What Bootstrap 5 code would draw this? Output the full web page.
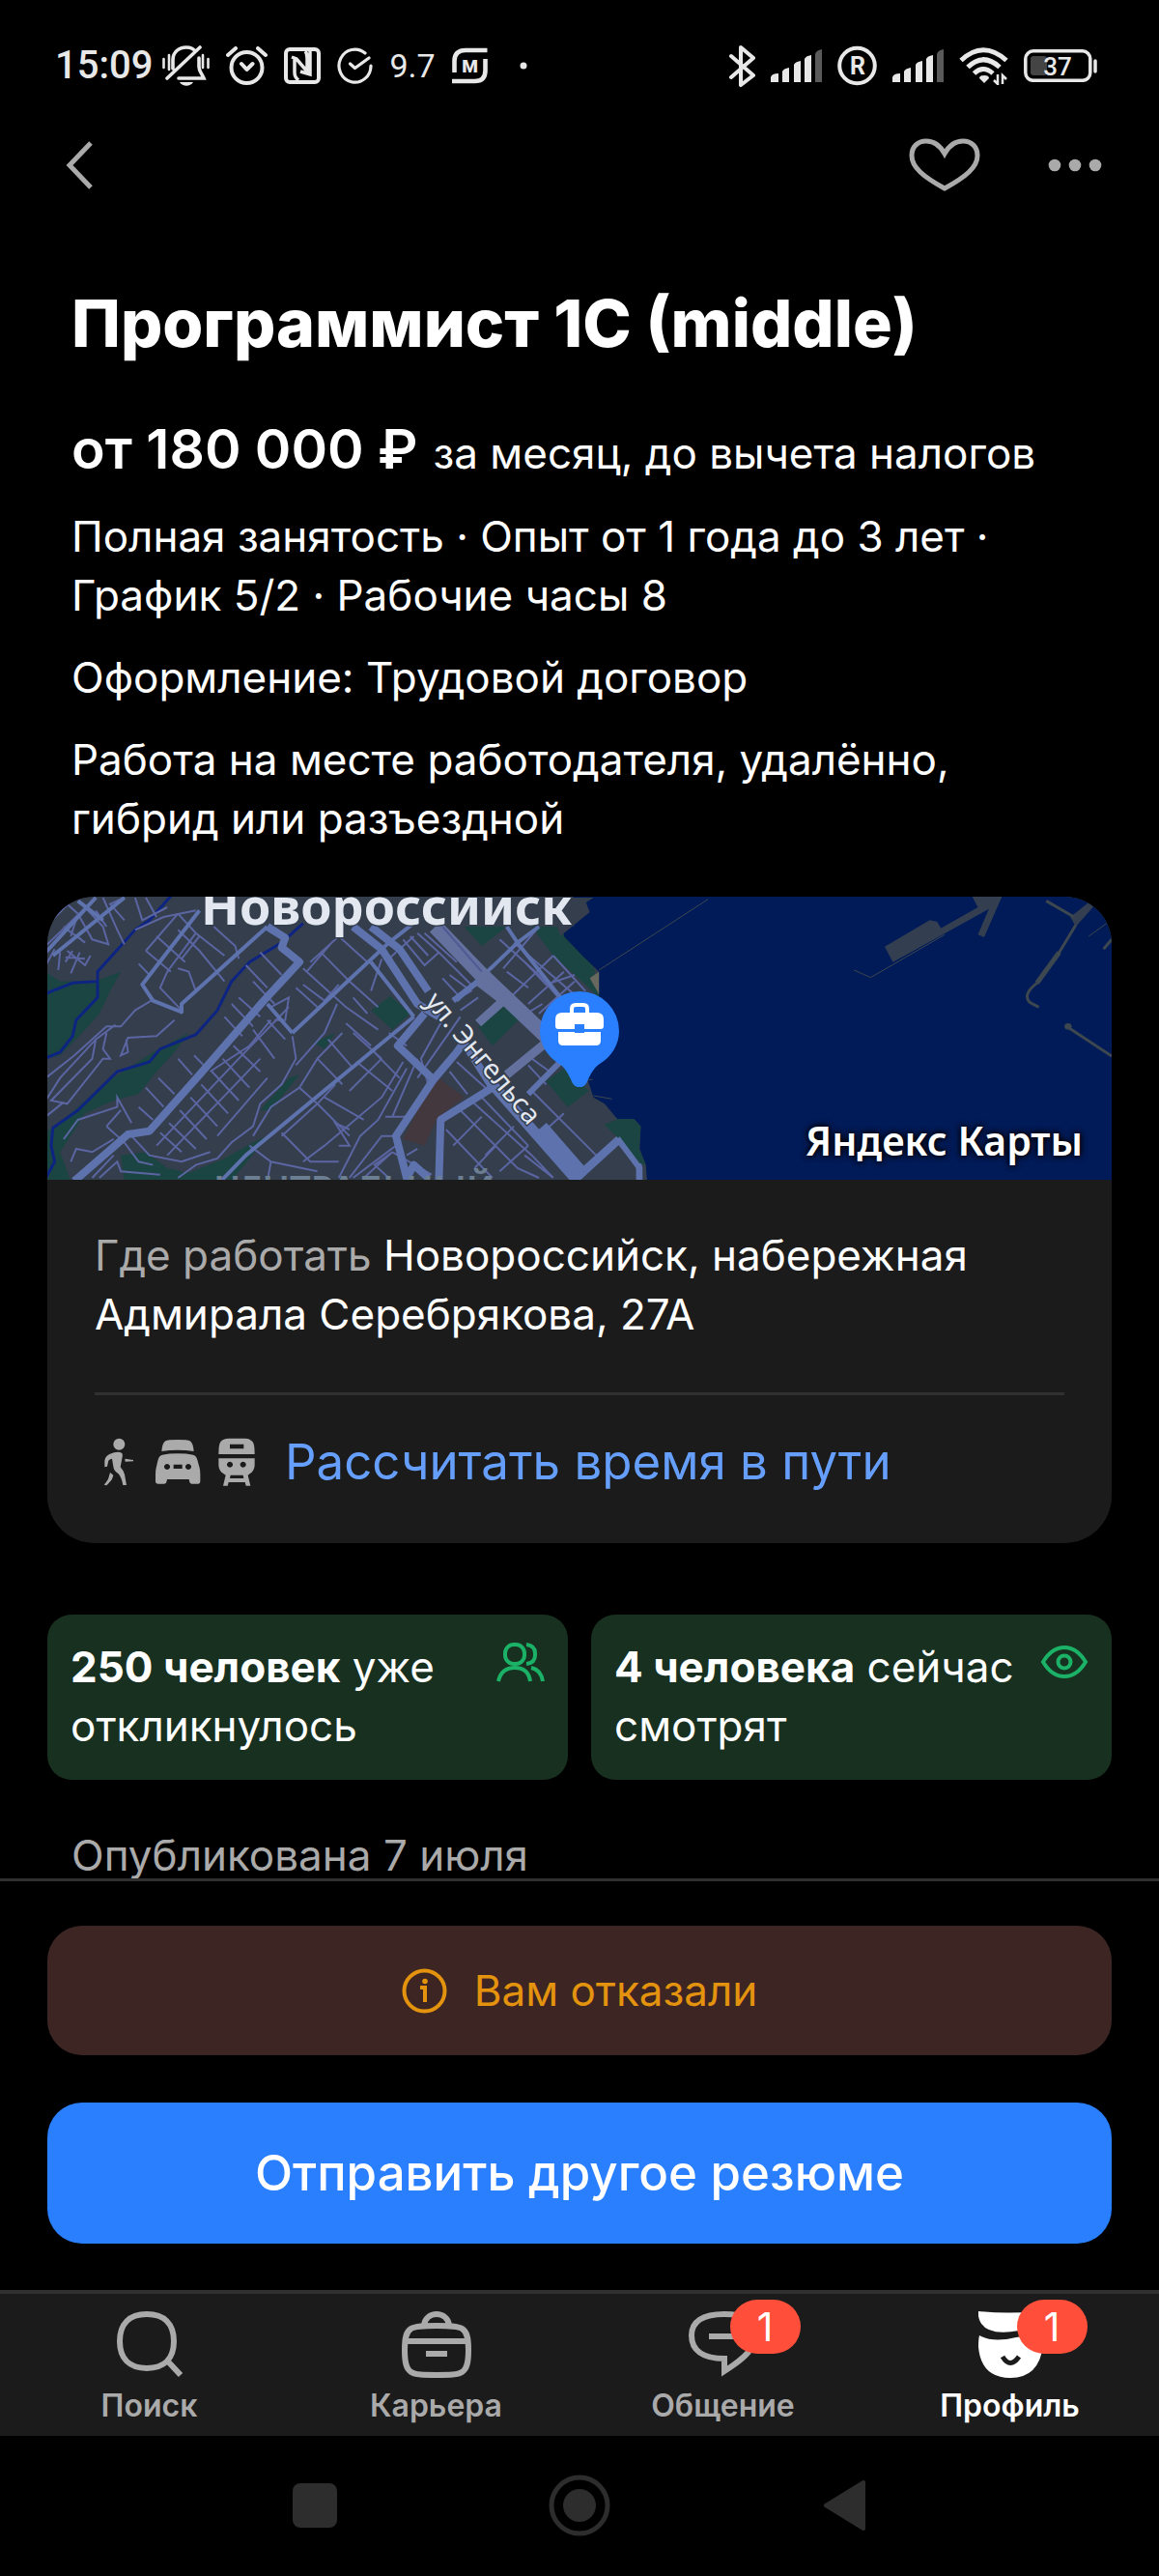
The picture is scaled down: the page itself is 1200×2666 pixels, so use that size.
<!DOCTYPE html>
<html lang="ru">

<head>
    <meta charset="UTF-8">
    <meta name="viewport" content="width=device-width, initial-scale=1.0">
    <title>Программист 1С (middle)</title>
    <link href="https://cdn.jsdelivr.net/npm/bootstrap@5.3.0/dist/css/bootstrap.min.css" rel="stylesheet">
    <style>
        body {
            background: #000;
            color: #fff;
            font-family: Inter, "Noto Sans", sans-serif;
            font-size: 44px;
            line-height: 61px;
        }

        svg {
            display: block;
            flex-shrink: 0;
        }

        .line-icon {
            fill: none;
            stroke: currentColor;
        }

        .muted {
            color: #aaa;
        }

        /* status bar */
        .status-bar {
            padding: 43px 64px 0 57px;
            color: #e8e8e8;
            font-family: Roboto, sans-serif;
            line-height: 50px;
        }

        .status-time {
            gap: 10px;
            font-size: 40px;
            font-weight: 500;
        }

        .status-left {
            gap: 17px;
        }

        .status-right {
            gap: 16px;
        }

        .status-speed {
            font-size: 34px;
        }

        /* header */
        .top-bar {
            padding: 28px 49px;
        }

        .icon-btn {
            height: 100px;
            border: 0;
            padding: 0 10px;
            background: none;
            color: #aaa;
        }

        .top-actions {
            gap: 50px;
        }

        /* vacancy */
        .vacancy {
            min-height: 0;
            padding: 41px 49px 0;
        }

        .intro {
            padding: 0 25px;
            margin-bottom: 50px;
        }

        .intro p {
            margin-bottom: 24px;
        }

        .intro p:last-child {
            margin-bottom: 0;
        }

        .intro h1 {
            font-size: 68px;
            font-weight: 800;
            line-height: 88px;
            margin-bottom: 51px;
        }

        .intro .salary {
            font-size: 57px;
            line-height: 72px;
        }

        .salary strong {
            font-weight: 600;
        }

        .salary span {
            font-size: 44px;
            line-height: 1;
        }

        .place {
            background: #1b1b1b;
            border-radius: 49px;
            margin-bottom: 74px;
        }

        .city-map {
            height: 293px;
        }

        .map-brand {
            right: 30px;
            bottom: 10px;
            font-family: "Noto Sans", sans-serif;
            font-size: 41px;
            font-weight: 600;
            text-shadow: 0 0 6px #000, 0 0 6px #000;
        }

        .place-info {
            padding: 48px 49px 50px;
        }

        .place-info hr {
            margin: 50px 0 35px;
            border-top: 3px solid #303030;
            opacity: 1;
        }

        .route-link {
            gap: 25px;
            color: #659ffb;
            font-size: 51px;
            line-height: 68px;
        }

        .route-icons {
            gap: 11px;
            fill: #aaa;
        }

        .facts {
            gap: 24px;
            margin-bottom: 48px;
        }

        .fact {
            flex: 1 1 0;
            gap: 12px;
            padding: 24px 24px 25px;
            border-radius: 25px;
            background: #18301f;
        }

        .fact svg {
            color: #1bb267;
        }

        .fact strong {
            font-weight: 700;
        }

        .published {
            padding: 0 25px;
        }

        /* response block */
        .response {
            gap: 49px;
            padding: 46px 49px 48px;
            border-top: 3px solid #303030;
        }

        .refusal {
            gap: 28px;
            padding: 37px;
            border-radius: 36px;
            background: #3c2522;
            color: #e4930f;
            line-height: 60px;
        }

        .send-btn {
            padding: 40px;
            border: 0;
            border-radius: 36px;
            background: #2a7fff;
            color: #fff;
            font-size: 51px;
            font-weight: 500;
            line-height: 66px;
        }

        /* tabs */
        .tabs {
            padding: 17px 6px 11px;
            border-top: 4px solid #303030;
            background: #1b1b1b;
        }

        .tab {
            flex: 1 1 0;
            gap: 9px;
            color: #aaa;
            font-size: 32px;
            font-weight: 600;
            line-height: 40px;
        }

        .tab.active {
            color: #fff;
        }

        .tab-count {
            top: -11px;
            left: 50%;
            width: 73px;
            margin-left: 7px;
            border-radius: 28px;
            background: #ff4f3a;
            color: #fff;
            font-size: 41px;
            font-weight: 400;
            line-height: 56px;
        }

        .system-bar {
            gap: 174px;
            padding: 22px 0 23px;
        }

        .system-bar .icon-btn {
            width: 100px;
            color: #2d2d2d;
        }
    </style>
</head>

<body>
    <div class="d-flex flex-column vh-100">
        <div class="status-bar d-flex justify-content-between align-items-center">
            <div class="status-left d-flex align-items-center">
                <div class="status-time d-flex align-items-center">
                    <span>15:09</span>
                    <svg class="line-icon" width="49" height="42" viewBox="0 0 49 42" stroke-width="3.6" stroke-linecap="round">
                        <path d="M11 24V15C11 7 17 2 25 2c4 0 7 1 9 4M38 13v9c0 5 3 7 5 12H17M39 2 5 34" />
                        <path d="M1.5 14v9M7 10v15M42 10v13M47.5 14v9" stroke-width="2.6" />
                        <path d="M18 38h14c-3 5-11 5-14 0z" fill="currentColor" stroke="none" />
                    </svg>
                </div>
                <svg class="line-icon" width="43" height="40" viewBox="0 0 43 40" stroke-width="4" stroke-linecap="round" stroke-linejoin="round">
                    <circle cx="21.5" cy="22" r="16" />
                    <path d="M16 18l5.5 6 6-6M2 9l8-7M41 9l-8-7" />
                </svg>
                <svg class="line-icon" width="38" height="38" viewBox="0 0 38 38" stroke-width="4">
                    <rect x="2" y="2" width="34" height="34" rx="4" />
                    <path d="M8 10l5 2 11 13V11q0-5-2-7M15 34q-4-3-4-8V12M27 4v24l-10-3" stroke-width="3.5" />
                </svg>
                <svg class="line-icon" width="37" height="38" viewBox="0 0 37 38" stroke-width="3.2" stroke-linecap="round" stroke-linejoin="round">
                    <path d="M35 19A16.5 17 0 1 1 29 6M13.5 17l5 4.5L33 11" />
                </svg>
                <span class="status-speed">9.7</span>
                <svg class="line-icon" width="37" height="38" viewBox="0 0 37 38" stroke-width="4.6">
                    <path d="M2.5 26V14Q2.5 3 14 3h22.5M34.5 12v12q0 11-11 11H0" />
                    <text x="18.5" y="25.5" text-anchor="middle" font-family="Roboto" font-size="19" font-weight="900" fill="currentColor" stroke="none">M</text>
                </svg>
                <svg width="42" height="8" viewBox="0 0 42 8" fill="currentColor">
                    <circle cx="20" cy="4" r="3.5" />
                </svg>
            </div>
            <div class="status-right d-flex align-items-center">
                <svg class="line-icon" width="27" height="43" viewBox="0 0 27 43" stroke-width="4" stroke-linecap="round" stroke-linejoin="round">
                    <path d="M2 11l23 20-13 10V2l13 11L2 33" />
                </svg>
                <svg width="53" height="34" viewBox="0 0 53 34" fill="currentColor">
                    <path d="M0 34v-5q1-4 8-4v9zM12 34V23q1-3 7-4v15zM24 34V16q1-3 7-4v22zM35 34V10q1-3 7-4v28z" />
                    <path d="M46 34V5q1-4 7-5v34z" fill="#5a5a5a" />
                </svg>
                <svg class="line-icon" width="41" height="42" viewBox="0 0 41 42" stroke-width="4">
                    <circle cx="20.5" cy="21" r="18.3" />
                    <text x="21" y="30" text-anchor="middle" font-family="Roboto" font-size="25" font-weight="700" fill="currentColor" stroke="none">R</text>
                </svg>
                <svg width="53" height="34" viewBox="0 0 53 34" fill="currentColor">
                    <path d="M0 34v-5q1-4 8-4v9zM12 34V23q1-3 7-4v15zM24 34V16q1-3 7-4v22zM35 34V10q1-3 7-4v28z" />
                    <path d="M46 34V5q1-4 7-5v34z" fill="#5a5a5a" />
                </svg>
                <svg class="line-icon" width="51" height="39" viewBox="0 0 51 39" stroke-width="5">
                    <path d="M2 13.5Q25 -8 49 13.5M9 20.5Q25 5 42 20.5M15.5 27Q25 18 35 27" />
                    <path d="M26 37l-5-5q0-3 5-3t5 3z" fill="currentColor" stroke="none" />
                    <path d="M40 28v10l-4-4M45 38V29l4 4" stroke-width="2.5" />
                </svg>
                <svg class="line-icon" width="76" height="34" viewBox="0 0 76 34" stroke-width="3.5">
                    <rect x="7" y="7" width="17" height="20" rx="3" fill="#444" stroke="none" />
                    <rect x="1.8" y="1.8" width="67" height="30.5" rx="8" />
                    <path d="M74 12v11" stroke-linecap="round" />
                    <text x="35" y="26.5" text-anchor="middle" font-family="Roboto" font-size="26" font-weight="500" fill="currentColor" stroke="none">37</text>
                </svg>
            </div>
        </div>

        <header class="top-bar d-flex justify-content-between align-items-center">
            <button type="button" class="icon-btn" aria-label="Назад">
                <svg class="line-icon" width="47" height="50" viewBox="0 0 47 50" stroke-width="5">
                    <path d="M35 2 13 25l22 23" />
                </svg>
            </button>
            <div class="top-actions d-flex">
                <button type="button" class="icon-btn" aria-label="В избранное">
                    <svg class="line-icon" width="74" height="56" viewBox="0 0 74 56" stroke-width="5">
                        <path d="M37 16C32 7 26 3 18 3 9 3 3 9 3 18c0 12 12 22 34 34 22-12 34-22 34-34C71 9 65 3 56 3c-8 0-14 4-19 13z" />
                    </svg>
                </button>
                <button type="button" class="icon-btn" aria-label="Ещё">
                    <svg width="56" height="14" viewBox="0 0 56 14" fill="currentColor">
                        <circle cx="7" cy="7" r="6.3" />
                        <circle cx="28" cy="7" r="6.3" />
                        <circle cx="49" cy="7" r="6.3" />
                    </svg>
                </button>
            </div>
        </header>

        <main class="vacancy flex-grow-1 overflow-hidden">
            <div class="intro">
                <h1>Программист 1С (middle)</h1>
                <p class="salary"><strong>от 180 000 ₽</strong> <span>за месяц, до вычета налогов</span></p>
                <p>Полная занятость · Опыт от 1 года до 3 лет · График 5/2 · Рабочие часы 8</p>
                <p>Оформление: Трудовой договор</p>
                <p>Работа на месте работодателя, удалённо, гибрид или разъездной</p>
            </div>

            <section class="place overflow-hidden">
                <div class="position-relative">
                    <svg class="city-map w-100" viewBox="0 0 1102 293" preserveAspectRatio="xMidYMid slice" fill="none">
                        <rect width="1102" height="293" fill="#343e4d" />
                        <g transform="translate(-9 -19) scale(.37 .3333)">
                            <!-- parks -->
                            <g fill="#1b4542">
                                <path d="M20 290 60 320 160 318 230 290 200 350 170 420 130 470 60 550 20 560z" />
                                <path d="M20 790 80 740 180 640 250 590 320 540 420 480 380 540 330 600 280 670 210 690 130 730 60 850 90 940H20z" />
                                <path d="M230 860 300 850 360 900 420 915 520 870 600 820 640 800 540 940H240z" />
                                <path d="M930 410 985 365 1040 420 990 470z" />
                                <path d="M1230 460 1300 380 1352 430 1270 520z" />
                                <path d="M770 510 830 480 800 530zM620 720 700 620 730 610 650 720z" />
                                <path d="M1190 150H1310L1240 210z" />
                                <path d="M1380 150 1470 150 1550 260 1575 380 1540 340 1440 240z" />
                                <path d="M1420 630 1470 590 1540 660 1480 710z" />
                            </g>
                            <path d="M1120 620 1190 680 1115 745 1080 830 1020 810 1060 720z" fill="#44383f" />
                            <!-- streams -->
                            <g stroke="#0e2482" stroke-width="3">
                                <path vector-effect="non-scaling-stroke" d="M370 55 310 130 270 160 165 290 165 320 95 325 20 358M165 320 165 370 105 440 95 490 60 540 20 558" />
                                <path vector-effect="non-scaling-stroke" d="M740 140 680 200 590 260 540 320 500 410 440 485 340 530 310 570 220 600 110 720 40 775 35 830 45 880 20 930" />
                            </g>
                            <!-- side streets -->
                            <g stroke="#5b65a2" stroke-width="2">
                                <path vector-effect="non-scaling-stroke" d="M60 60 110 110 150 190 195 205 180 150 130 90M20 150 100 60M20 210 160 60M70 150 130 200M80 160 120 190M110 110 90 180M180 60 220 160M240 60 200 80 240 130M270 60 290 130 360 90M300 60 330 120M220 160 240 205M160 100 190 150" />
                                <path vector-effect="non-scaling-stroke" d="M60 230 55 285M80 225 130 270 145 240M95 225 75 260M115 230 90 295M75 245 130 250M20 270 45 220" />
                                <path vector-effect="non-scaling-stroke" d="M270 160 350 120 440 100M300 225 390 110M300 225 370 290M390 110 440 170 520 240M330 180 410 260M390 160 450 225 520 320M440 170 360 290 340 340 400 410M490 150 550 210 560 250M390 280 420 290 440 350M280 265 310 300M450 180 400 250" />
                                <path vector-effect="non-scaling-stroke" d="M315 380 270 410 230 460 190 460 100 550 20 620M215 455 160 500 60 620 20 690M160 500 150 560 35 690 80 700 180 560 200 560 180 530 190 480M380 440 330 490 250 495 230 550 250 540 245 500M20 740 70 695" />
                                <path vector-effect="non-scaling-stroke" d="M600 320 660 390M560 370 620 430M540 390 600 460M520 430 570 490M580 270 640 340M620 230 680 300M650 400 700 370 690 440 660 440M720 340 780 400M740 280 860 400 950 470M760 260 840 180 920 260M790 230 870 320 950 400M840 330 800 380 740 330M820 200 750 290M960 250 930 350M880 370 920 420" />
                                <path vector-effect="non-scaling-stroke" d="M545 520 620 600M515 560 590 650M485 600 560 690M455 640 530 730M425 680 500 770M395 720 470 810M365 760 440 840M340 790 400 850M600 470 660 560M640 440 690 500M480 600 590 520 650 440M330 830 560 560 700 400M360 860 620 560M500 800 640 620M390 560 430 610M435 550 470 590M335 620 380 670M300 650 350 710M280 710 320 750" />
                                <path vector-effect="non-scaling-stroke" d="M710 490 720 560 680 640 620 700 600 770 540 820 500 870 440 890 390 930M835 390 800 480 720 580M850 480 780 560 730 650 650 710 600 800M860 450 930 520M810 500 880 590M780 560 850 640M880 480 960 560M730 650 780 700 870 800M800 680 910 750M830 640 780 700 680 800M890 570 990 660M930 530 1010 620M1020 570 960 680 800 830 740 880M960 560 870 660M980 480 1030 520" />
                                <path vector-effect="non-scaling-stroke" d="M680 790 760 880 840 880M590 830 650 880 780 910M650 880 640 940M70 810 110 750 220 710 220 680 260 760M190 770 240 820 280 880 320 890M90 880 105 840 150 850 210 810M190 770 230 720M170 930 220 880 230 910 340 920M260 800 310 860 400 880 480 850M870 780 830 760 870 830 840 830M150 930 210 860" />
                                <path vector-effect="non-scaling-stroke" d="M1030 590 950 750 900 800 840 930M1060 560 990 740M870 930 960 800 1010 800M880 930 1000 830M970 740 1030 740M910 930 990 850 940 890 980 930M990 850 1100 920M1030 860 1060 840" />
                                <path vector-effect="non-scaling-stroke" d="M1020 190 1080 270 1120 230 1060 170M1040 180 1090 240M1120 230 1210 330M1080 170 1170 260M1130 310 1180 370 1210 350 1150 300M1180 410 1230 370M1140 420 1070 560 1090 640M1180 430 1060 620M1150 600 1200 670M1170 570 1260 660M1050 180 980 250" />
                                <path vector-effect="non-scaling-stroke" d="M1290 190 1400 300 1470 390M1330 200 1540 400M1440 240 1320 370M1470 290 1370 390M1500 320 1400 420M1440 240 1530 350M1400 150 1300 280M1310 290 1370 340M1360 260 1420 330 1500 300M1350 430 1410 390" />
                                <path vector-effect="non-scaling-stroke" d="M1180 720 1340 900 1400 930M1210 690 1380 860 1440 930M1240 680 1370 830M1140 780 1270 930M1280 830 1220 900M1330 770 1250 860M1370 830 1290 910M1160 830 1240 740M1440 930 1360 860M1380 660 1560 860M1470 730 1420 780M1430 600 1380 560M1370 580 1420 640M1500 930 1400 800" />
                            </g>
                            <!-- avenues -->
                            <g stroke="#5e72ad" stroke-linejoin="round">
                                <path vector-effect="non-scaling-stroke" stroke-width="4" d="M20 230 160 60M240 60 40 240M450 100 290 330 320 380 400 415 400 390 640 150M110 70 180 130M710 480 640 390M710 480 980 200 1060 130M1340 200 1170 380M1340 200 1460 370M1340 200 1310 150M930 260 1050 430M1050 430 580 860 510 940M1340 200 1400 150" />
                                <path vector-effect="non-scaling-stroke" stroke-width="8" d="M100 940 250 795 310 785 450 610 630 380 730 260 680 215 690 185 640 150" />
                                <path vector-effect="non-scaling-stroke" stroke-width="8" d="M880 150 960 220 1060 390 1120 430M930 150 1010 220 1090 350M1080 420 1005 520 1105 625 1170 540 1190 510 1270 650 1125 750 1120 940M1105 625 1000 800 1030 930 1050 890 1090 930" />
                                <path vector-effect="non-scaling-stroke" stroke-width="11" d="M1270 640 1500 930 1520 910 1410 770" />
                                <path vector-effect="non-scaling-stroke" stroke-width="6" d="M1370 670 1460 570M1520 910 1620 810 1680 890V940M1160 380 1230 320" />
                                <path vector-effect="non-scaling-stroke" stroke-width="16" stroke="#64719f" d="M1110 150 1240 300 1420 490" />
                                <path vector-effect="non-scaling-stroke" stroke-width="9" stroke="#64719f" d="M1230 320 1300 380 1230 450M1310 610 1420 510" />
                                <path vector-effect="non-scaling-stroke" stroke-width="2" stroke="#4f5a94" d="M1130 150 1240 290" />
                            </g>
                        </g>
                        <!-- bay -->
                        <g transform="translate(531 -19) scale(.3827 .3333)">
                            <path d="M10 180V50H1500V940H235L232 890 215 840 218 770 200 748H155L120 700 90 680 70 610 60 560 105 400V290L60 240z" fill="#001b57" />
                            <path d="M120 765 155 748H200L218 770 213 840 232 890 200 880 160 810z" fill="#1b4542" />
                            <path d="M105 290V360L80 310z" fill="#68685f" />
                            <path d="M-30 60H90L70 75 80 105 0 180z" fill="#343e4d" />
                            <path d="M40 940 160 815 215 900V940" stroke="#5e72ad" stroke-width="6" vector-effect="non-scaling-stroke" />
                            <g fill="#333f51">
                                <path d="M878 212 1000 130 1020 135 1030 155 1130 90 1115 57H1195L1147 183 1130 175 1160 95 1030 178 900 260z" />
                                <path d="M1380 120 1430 75 1445 85 1395 150z" />
                            </g>
                            <g stroke="#3d474f" stroke-width="2">
                                <path vector-effect="non-scaling-stroke" stroke-width="1" d="M105 285 400 65M795 285 840 308 1040 175M90 675 140 685M1430 180 1478 140M70 625H88" />
                                <path vector-effect="non-scaling-stroke" d="M1315 70 1390 120M1395 145 1350 230 1290 325Q1250 360 1270 385L1295 400M1370 460 1492 552M1470 220 1492 190" stroke-width="3" />
                                <path vector-effect="non-scaling-stroke" d="M1350 230 1290 325" stroke-width="5" />
                                <circle cx="1374" cy="460" r="9" fill="#3d474f" />
                            </g>
                        </g>
                        <g font-family="Noto Sans, sans-serif" fill="#e3e8f0">
                            <text x="159" y="29" font-size="52" font-weight="700" stroke="#343e4d" stroke-width="3" paint-order="stroke">Новороссийск</text>
                            <text transform="translate(390 109) rotate(50)" font-size="28" stroke="#343e4d" stroke-width="3" paint-order="stroke">ул. Энгельса</text>
                            <text x="172" y="316" font-size="38" font-weight="600" fill="#6c7f92">ЦЕНТРАЛЬНЫЙ</text>
                        </g>
                        <!-- pin -->
                        <path d="M551 98a41 41 0 0 1 41 41c0 14-8 27-20 34-6 4-9 10-12 16-3 8-6 8-9 8s-6 0-9-8c-3-6-6-12-12-16-12-7-20-20-20-34a41 41 0 0 1 41-41z" fill="#2a7fff" />
                        <path d="M533 120h36q7 0 7 7v7q0 3-3 3H529q-3 0-3-3v-7q0-7 7-7zM529 140h44v9q0 5-5 5H534q-5 0-5-5z" fill="#fff" />
                        <path d="M543 121v-5q0-4 4-4h8q4 0 4 4v5" stroke="#fff" stroke-width="4" />
                        <path d="M546 132h10v9h-10z" fill="#2a7fff" />
                    </svg>
                    <span class="map-brand position-absolute">Яндекс Карты</span>
                </div>
                <div class="place-info">
                    <p class="mb-0"><span class="muted">Где работать</span> Новороссийск, набережная Адмирала Серебрякова, 27А</p>
                    <hr>
                    <a href="#" class="route-link d-flex align-items-center text-decoration-none">
                        <span class="route-icons d-flex">
                            <svg width="50" height="50" viewBox="53 94 150 150">
                                <circle cx="129" cy="114" r="18" />
                                <path d="M84 185v-20q2-14 15-20 25-11 38-4 4 3 2 12l-6 32q12 13 14 28l5 28h-11q-5-26-15-36-14-9-15-22l-4-24q-12 3-12 10l-3 14zM82 240q8-9 13-18l6-20 10 8q-3 14-9 19-6 7-12 13zM147 159l26 4v4l-25 1z" />
                            </svg>
                            <svg width="50" height="50" viewBox="235 94 150 150">
                                <path d="M260 136q2-26 12-32 6-4 38-4t38 4q10 6 12 32-24-4-50-4t-50 4z" />
                                <path fill-rule="evenodd" d="M248 166q3-16 14-19 20-4 48-4t48 4q11 3 14 19l6 22q2 8 2 20v22q0 7-6 7h-20q-5 0-7-5l-2-9h-68l-2 9q-2 5-7 5h-20q-7 0-7-7v-22q0-12 2-20zM277 175a9 9 0 1 0 .1 0zM343 175a9 9 0 1 0 .1 0zM297 177v13h27v-13z" />
                            </svg>
                            <svg width="50" height="50" viewBox="418 94 150 150">
                                <path fill-rule="evenodd" d="M437 145q0-30 6-38 8-11 25-11h50q17 0 25 11 6 8 6 38zM472 114v14h43v-14z" />
                                <path fill-rule="evenodd" d="M437 158h112v20q0 14-9 23l-12 9 8 33h-14l-3-11h-51l-3 11h-14l8-33-13-9q-9-9-9-23zM472 168a9 9 0 1 0 .1 0zM513 168a9 9 0 1 0 .1 0zM474 210l-2 10h43l-2-10z" />
                            </svg>
                        </span>
                        Рассчитать время в пути
                    </a>
                </div>
            </section>

            <div class="facts d-flex">
                <div class="fact d-flex justify-content-between">
                    <p class="mb-0"><strong>250 человек</strong> уже откликнулось</p>
                    <svg class="line-icon" width="50" height="50" viewBox="0 0 50 50" stroke-width="4">
                        <rect x="9" y="7" width="20" height="20" rx="9" />
                        <path d="M31 7q9 1 9 9v2q0 8-9 9M2 45q3-14 17-14t16 14M36 31q10 2 12 14" />
                    </svg>
                </div>
                <div class="fact d-flex justify-content-between">
                    <p class="mb-0"><strong>4 человека</strong> сейчас смотрят</p>
                    <svg class="line-icon" width="50" height="50" viewBox="0 0 50 50" stroke-width="4">
                        <path d="M3 25Q12 10 25 10t22 15Q38 40 25 40T3 25z" />
                        <circle cx="25" cy="25" r="6.5" />
                    </svg>
                </div>
            </div>

            <p class="published muted mb-0">Опубликована 7 июля</p>
        </main>

        <div class="response d-flex flex-column">
            <div class="refusal d-flex justify-content-center align-items-center">
                <svg class="line-icon" width="47" height="47" viewBox="0 0 47 47" stroke-width="4">
                    <circle cx="23.5" cy="23.5" r="21" />
                    <path d="M19 20h5v15" />
                    <circle cx="24" cy="13.5" r="2.8" fill="currentColor" stroke="none" />
                </svg>
                <span>Вам отказали</span>
            </div>
            <button type="button" class="send-btn">Отправить другое резюме</button>
        </div>

        <nav class="tabs d-flex">
            <a href="#" class="tab position-relative d-flex flex-column align-items-center text-decoration-none">
                <svg class="line-icon" width="74" height="70" viewBox="0 0 74 70" stroke-width="6">
                    <path d="M34 4c18 0 28 10 28 28s-10 28-28 28S6 50 6 32 16 4 34 4zM55 52l14 15" />
                </svg>
                Поиск
            </a>
            <a href="#" class="tab position-relative d-flex flex-column align-items-center text-decoration-none">
                <svg class="line-icon" width="74" height="70" viewBox="0 0 74 70" stroke-width="6">
                    <path d="M37 16c27 0 33 0 33 25 0 26-6 26-33 26S4 67 4 41c0-25 6-25 33-25zM24 16c1-16 25-16 26 0M5 32h64M26 45h22" />
                </svg>
                Карьера
            </a>
            <a href="#" class="tab position-relative d-flex flex-column align-items-center text-decoration-none">
                <svg class="line-icon" width="74" height="70" viewBox="0 0 74 70" stroke-width="6">
                    <path d="M38 4C15 4 4 12 4 26c0 15 11 24 34 24v13c22-14 32-24 32-38C70 12 60 4 38 4zM22 27h30" />
                </svg>
                Общение
                <span class="tab-count position-absolute text-center">1</span>
            </a>
            <a href="#" class="tab active position-relative d-flex flex-column align-items-center text-decoration-none">
                <svg width="74" height="70" viewBox="0 0 74 70" fill="currentColor">
                    <path d="M4 1q30 3 66 0v16q-12 0-24 4Q8 28 4 6z" />
                    <path d="M5 26q14 8 38 2l28-4v12q-4 34-34 34T4 38q0-8 1-12z" />
                    <path d="M29 48q8 13 17 0" fill="none" stroke="#1b1b1b" stroke-width="5" />
                </svg>
                Профиль
                <span class="tab-count position-absolute text-center">1</span>
            </a>
        </nav>

        <div class="system-bar d-flex justify-content-center">
            <button type="button" class="icon-btn d-flex align-items-center justify-content-center" aria-label="Недавние">
                <svg width="46" height="46" viewBox="0 0 46 46" fill="currentColor">
                    <rect width="46" height="46" rx="8" />
                </svg>
            </button>
            <button type="button" class="icon-btn d-flex align-items-center justify-content-center" aria-label="Домой">
                <svg class="line-icon" width="64" height="64" viewBox="0 0 64 64" stroke-width="5">
                    <circle cx="32" cy="32" r="29" />
                    <circle cx="32" cy="32" r="17" fill="currentColor" stroke="none" />
                </svg>
            </button>
            <button type="button" class="icon-btn d-flex align-items-center justify-content-center" aria-label="Назад">
                <svg width="43" height="54" viewBox="0 0 43 54" fill="currentColor" stroke="currentColor" stroke-width="4" stroke-linejoin="round">
                    <path d="M41 3v48L2 27z" />
                </svg>
            </button>
        </div>
    </div>

    <script src="https://cdn.jsdelivr.net/npm/bootstrap@5.3.0/dist/js/bootstrap.bundle.min.js"></script>
</body>

</html>
